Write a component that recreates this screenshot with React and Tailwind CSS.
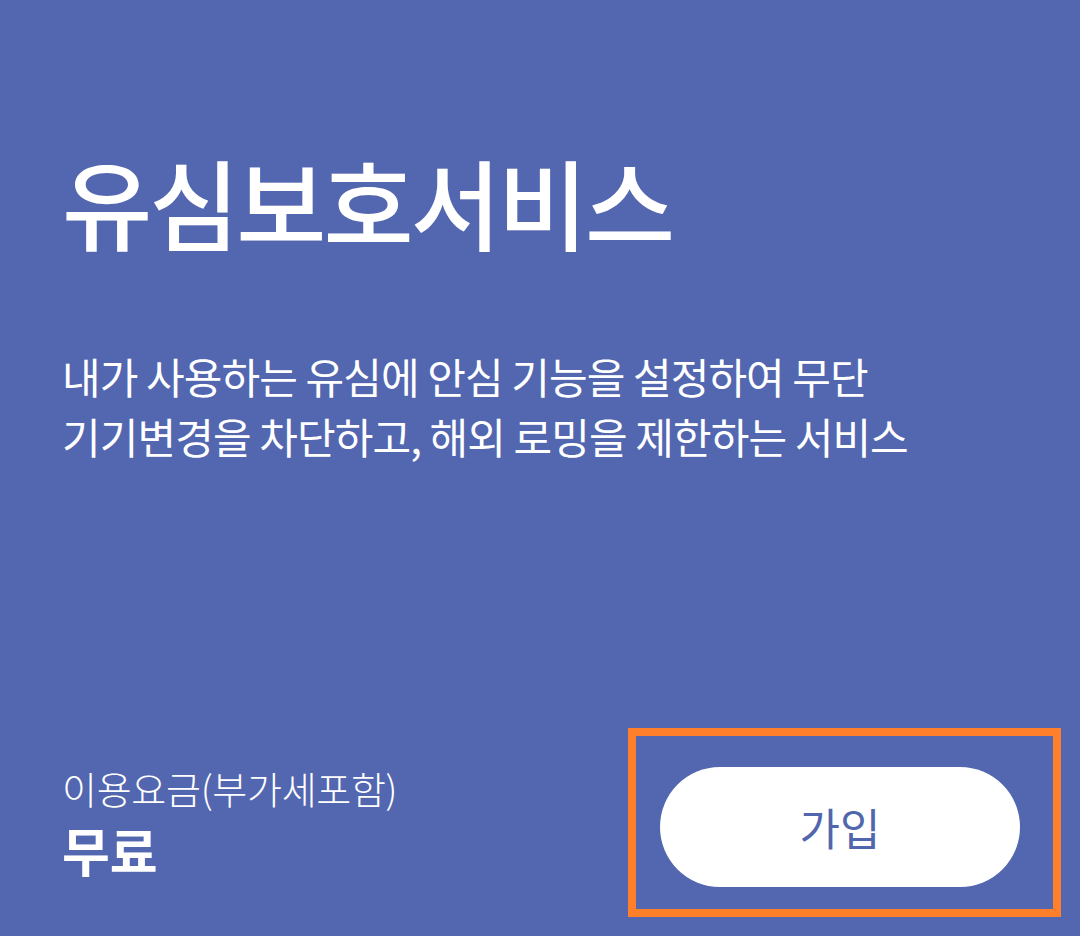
export default function App() {
  const font = { fontFamily: '"Noto Sans CJK KR", "Noto Sans", sans-serif' }

  return (
    <div className="w-[1080px] h-[936px] bg-[#5367b0] text-white flex flex-col" style={font}>
      <div className="pl-[62px] pt-[142px]">
        <h1 className="text-[98px] leading-[116px] font-medium tracking-[-3px]">유심보호서비스</h1>
      </div>

      <div className="pl-[62px] mt-[88px]">
        <p className="text-[42px] leading-[60px] tracking-[-0.9px]">
          내가 사용하는 유심에 안심 기능을 설정하여 무단
          <br />
          기기변경을 차단하고, 해외 로밍을 제한하는 서비스
        </p>
      </div>

      <div className="mt-auto flex items-end justify-between pl-[62px] pr-[19px] pb-[19px]">
        <div className="mb-[35px]">
          <p className="text-[38px] leading-[48px] font-light tracking-[-0.3px]">이용요금(부가세포함)</p>
          <p className="text-[52px] leading-[64px] font-bold mt-[6px]">무료</p>
        </div>

        <div className="border-[8px] border-[#ff7f2a] pl-[24px] pr-[33px] pt-[31px] pb-[22px]">
          <button className="w-[360px] h-[120px] rounded-full bg-white text-[#5166ac] text-[44px] flex items-center justify-center">
            가입
          </button>
        </div>
      </div>
    </div>
  )
}
